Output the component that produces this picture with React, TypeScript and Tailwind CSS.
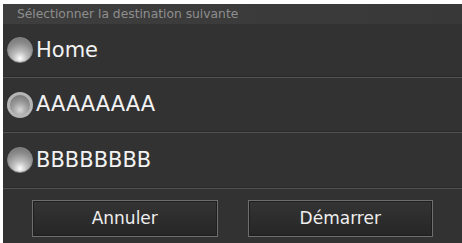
import React from "react";

const font = { fontFamily: '"DejaVu Sans", "Noto Sans", sans-serif' };

function Radio({ ring }: { ring?: boolean }) {
  return (
    <div
      className={
        "w-[26px] h-[26px] rounded-full shrink-0 " +
        (ring
          ? "border-[3px] border-[#b5b5b5] bg-[radial-gradient(circle_at_50%_75%,#d8d8d8_0%,#9a9a9a_45%,#6a6a6a_100%)]"
          : "border border-[#8a8a8a] bg-[radial-gradient(circle_at_50%_85%,#ffffff_0%,#bdbdbd_30%,#8c8c8c_65%,#6e6e6e_100%)]")
      }
    />
  );
}

function Row({ label, ring, h }: { label: string; ring?: boolean; h: string }) {
  return (
    <div className={"flex flex-col " + h}>
      <div className="flex-1 flex items-center pl-[4px] gap-[3px]">
        <Radio ring={ring} />
        <span className="text-[21px] text-[#f2f2f2] leading-none">{label}</span>
      </div>
      <div className="h-[1px] bg-[#2a2a2a]" />
      <div className="h-[1px] bg-[#525252]" />
    </div>
  );
}

function Btn({ label }: { label: string }) {
  return (
    <div className="flex-1 h-[37px] border border-[#6e6e6e] bg-[linear-gradient(#343434,#262626)] shadow-[inset_0_0_0_1px_#1e1e1e] flex items-center justify-center">
      <span className="text-[17px] text-[#eeeeee] leading-none">{label}</span>
    </div>
  );
}

export default function App() {
  return (
    <div className="w-[462px] h-[243px] bg-white pt-[4px] pl-[3px]" style={font}>
      <div className="w-full h-full bg-[#323232] flex flex-col">
        <div className="h-[20px] bg-[linear-gradient(90deg,#3e3e3e,#383838)] flex items-center pl-[14px]">
          <span className="text-[12.3px] text-[#8e8e8e] leading-none">Sélectionner la destination suivante</span>
        </div>
        <Row label="Home" h="h-[54px]" />
        <Row label="AAAAAAAA" ring h="h-[55px]" />
        <Row label="BBBBBBBB" h="h-[56px]" />
        <div className="flex-1 flex items-center px-[29px] gap-[30px] pt-[5px]">
          <Btn label="Annuler" />
          <Btn label="Démarrer" />
        </div>
      </div>
    </div>
  );
}
